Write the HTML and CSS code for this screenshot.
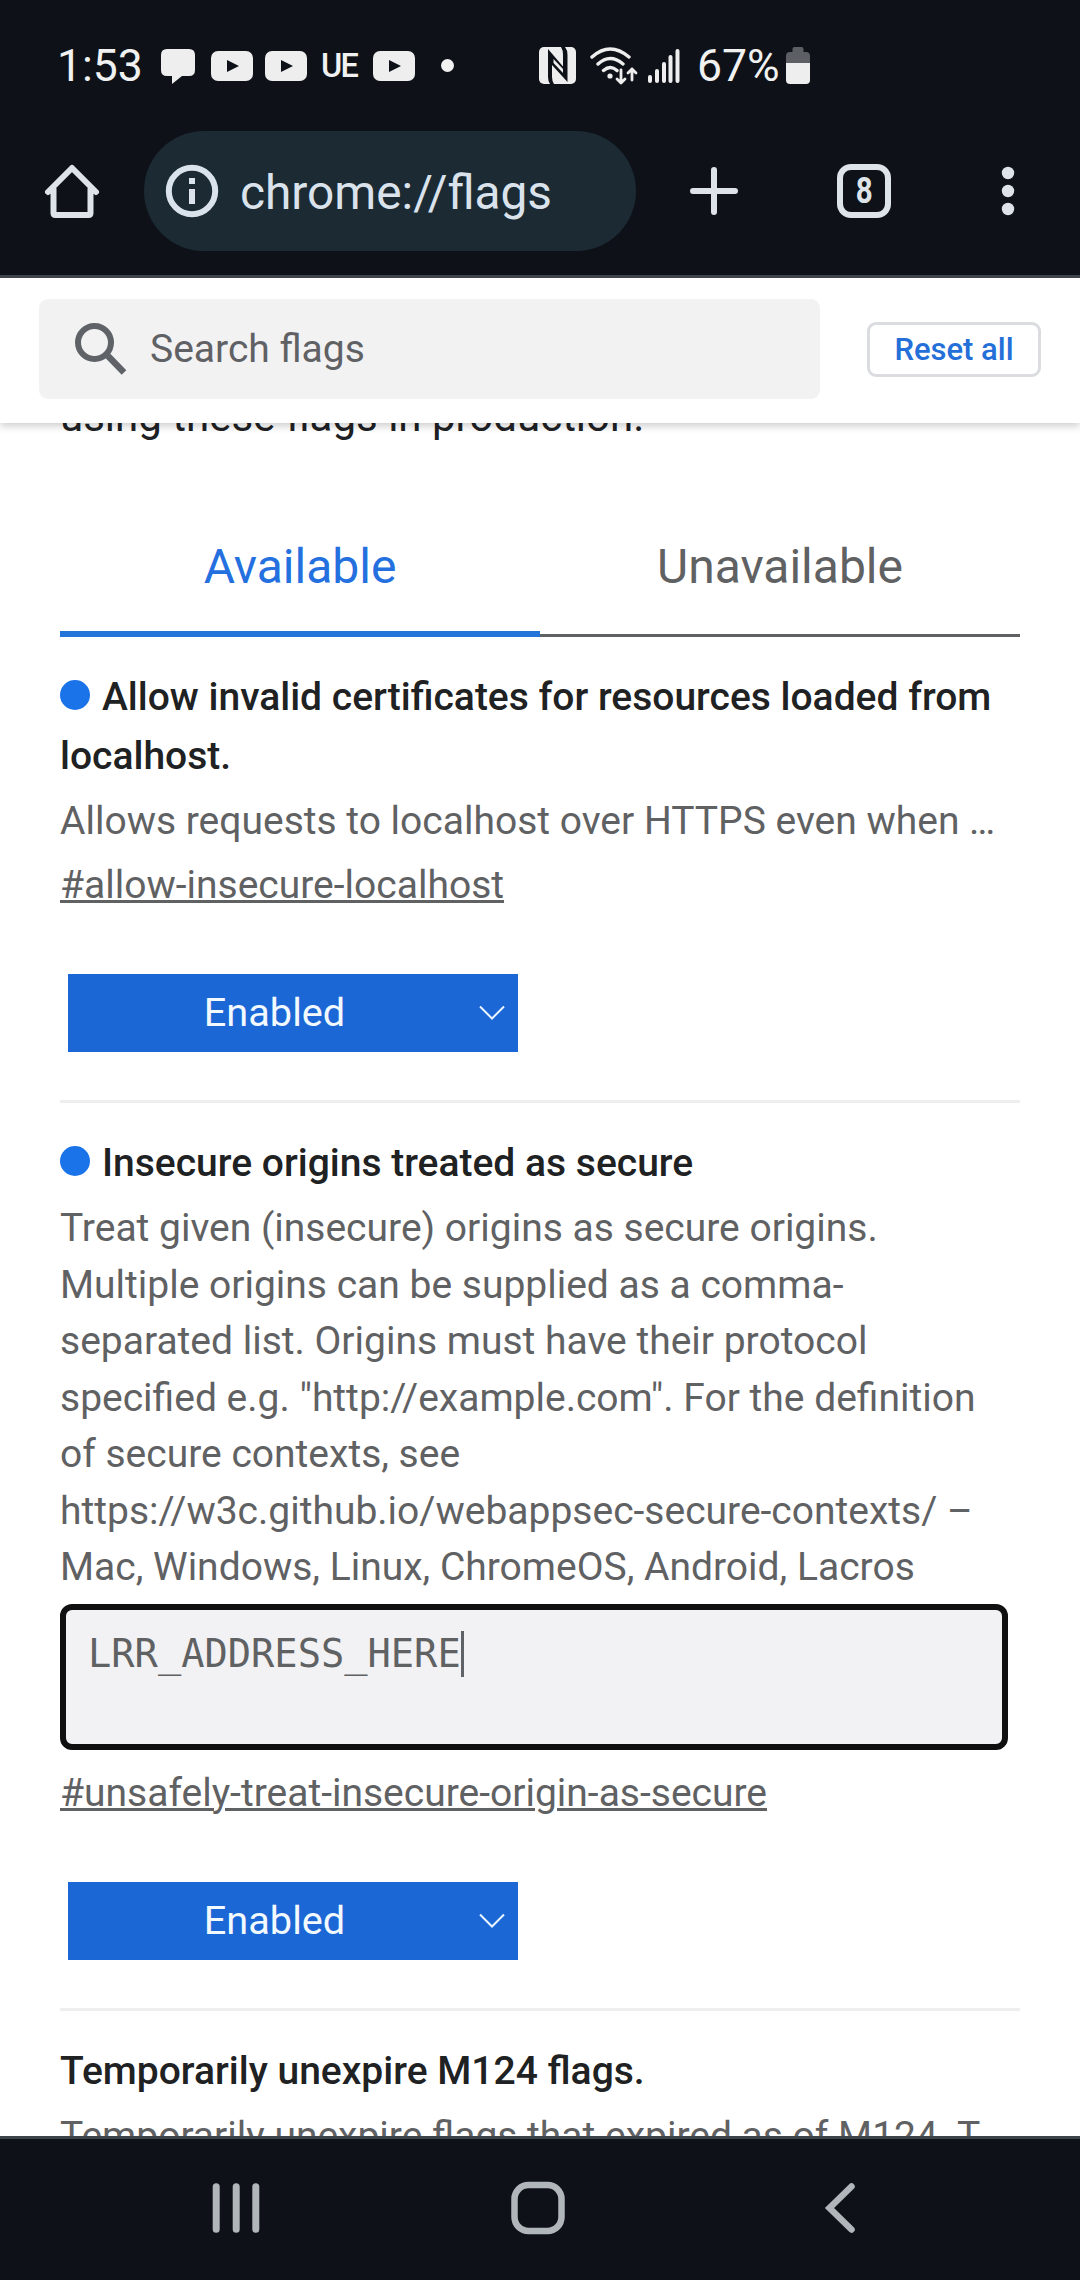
FILE: index.html
```html
<!DOCTYPE html>
<html lang="en">
<head>
<meta charset="utf-8">
<title>Experiments</title>
<link rel="stylesheet" href="styles.css">
</head>
<body>
<div class="screen">
  <header class="chrome">
    <div class="status">
      <div class="status-left">
        <span class="clock">1:53</span>
        <svg class="ic-chat" width="34" height="36" viewBox="0 0 34 36"><path fill="#eee" d="M6 0h22q6 0 6 6v15q0 6-6 6h-7L11 35v-8H6q-6 0-6-6V6q0-6 6-6z"/></svg>
        <svg class="ic-video" width="42" height="30" viewBox="0 0 42 30"><rect width="42" height="30" rx="7" fill="#eee"/><path fill="#0e1218" d="M16 9l12 6-12 6z"/></svg>
        <svg class="ic-video" width="42" height="30" viewBox="0 0 42 30"><rect width="42" height="30" rx="7" fill="#eee"/><path fill="#0e1218" d="M16 9l12 6-12 6z"/></svg>
        <span class="ue">UE</span>
        <svg class="ic-video" width="42" height="30" viewBox="0 0 42 30"><rect width="42" height="30" rx="7" fill="#eee"/><path fill="#0e1218" d="M16 9l12 6-12 6z"/></svg>
        <span class="more-dot"></span>
      </div>
      <div class="status-right">
        <svg width="37" height="37" viewBox="0 0 37 37"><rect width="37" height="37" rx="5" fill="#eee"/><path fill="#0e1218" d="M9 2l15 17.500V8q0-5-2-8h4q2.500 3 2.500 8v27L13 18v12q0 4 2 7h-4q-2-3-2-7z"/><path fill="#eee" d="M14.500 12v4L24 26v-4z"/></svg>
        <svg class="ic-wifi" width="48" height="38" viewBox="0 0 48 38" fill="none" stroke="#eee" stroke-width="3.400" stroke-linecap="round"><path d="M2 10Q20-6 39 10M8 17q12-11 25 0M13.500 23.500q7-6 13.500 0"/><circle cx="20" cy="29" r="2.600" fill="#eee" stroke="none"/><path stroke-width="2.800" stroke-linejoin="round" d="M31 23v13M27 32l4 4 4-4M42 33V22M38 26l4-4 4 4"/></svg>
        <svg class="ic-signal" width="32" height="36" viewBox="0 0 32 36" stroke="#eee" stroke-width="4" stroke-linecap="round"><path d="M2 29v4M9 23v10M16 16v17M22.500 9v24M29.500 3v30"/></svg>
        <span class="battery-text">67%</span>
        <svg class="ic-battery" width="24" height="37" viewBox="0 0 24 37"><path fill="#5c5f64" d="M6.500 5V2q0-2 2-2h7q2 0 2 2v3H20q4 0 4 4v8H0V9q0-4 4-4z"/><path fill="#eee" d="M0 16h24v17q0 4-4 4H4q-4 0-4-4z"/></svg>
      </div>
    </div>
    <div class="toolbar">
      <svg class="ic-home" width="56" height="56" viewBox="0 0 56 56" fill="none" stroke="#dee3e9" stroke-width="6" stroke-linejoin="round" stroke-linecap="round"><path d="M4 29L28 5l24 24M9.500 26v24q0 2 2 2h33q2 0 2-2V26" /></svg>
      <div class="omnibox">
        <svg width="54" height="54" viewBox="0 0 54 54"><circle cx="27" cy="27" r="23.200" fill="none" stroke="#dae3ec" stroke-width="6"/><path fill="#dae3ec" d="M24 14h6v6h-6zM24 25h6v15h-6z"/></svg>
        <span class="url">chrome://flags</span>
      </div>
      <svg class="ic-plus" width="50" height="50" viewBox="0 0 50 50" stroke="#dee3e9" stroke-width="6" stroke-linecap="round"><path d="M25 4v42M4 25h42"/></svg>
      <div class="tab-count"><span>8</span></div>
      <svg class="ic-dots" width="14" height="50" viewBox="0 0 14 50" fill="#dee3e9"><circle cx="7" cy="7" r="6.200"/><circle cx="7" cy="25" r="6.200"/><circle cx="7" cy="43" r="6.200"/></svg>
    </div>
  </header>

  <main class="page">
    <div class="search-bar">
      <div class="search-field">
        <svg width="54" height="54" viewBox="0 0 54 54" fill="none" stroke="#5f6368"><circle cx="20.500" cy="20.500" r="16.500" stroke-width="6"/><path stroke-width="4" d="M32 32l3 3"/><path stroke-width="6.500" d="M34 34l16 16.500"/></svg>
        <span>Search flags</span>
      </div>
      <div class="reset">Reset all</div>
    </div>

    <div class="content">
      <p class="intro">using these flags in production.</p>
      <div class="tabs">
        <div class="tab active">Available</div>
        <div class="tab">Unavailable</div>
      </div>

      <section class="flag">
        <h2><span class="bullet"></span>Allow invalid certificates for resources loaded from localhost.</h2>
        <p>Allows requests to localhost over HTTPS even when …</p>
        <a class="permalink">#allow-insecure-localhost</a>
        <div class="select"><span>Enabled</span><svg width="26" height="16" viewBox="0 0 26 16" fill="none" stroke="#eaf5ff" stroke-width="2"><path d="M1 1.500l12 12 12-12"/></svg></div>
      </section>

      <section class="flag">
        <h2><span class="bullet"></span>Insecure origins treated as secure</h2>
        <p>Treat given (insecure) origins as secure origins. Multiple origins can be supplied as a comma-separated list. Origins must have their protocol specified e.g. "http://example.com". For the definition of secure contexts, see<br>https://w3c.github.io/webappsec-secure-contexts/ – Mac, Windows, Linux, ChromeOS, Android, Lacros</p>
        <div class="textarea"><span class="value">LRR_ADDRESS_HERE</span><span class="caret"></span></div>
        <a class="permalink">#unsafely-treat-insecure-origin-as-secure</a>
        <div class="select"><span>Enabled</span><svg width="26" height="16" viewBox="0 0 26 16" fill="none" stroke="#eaf5ff" stroke-width="2"><path d="M1 1.500l12 12 12-12"/></svg></div>
      </section>

      <section class="flag">
        <h2>Temporarily unexpire M124 flags.</h2>
        <p>Temporarily unexpire flags that expired as of M124. T</p>
      </section>
    </div>
  </main>

  <nav class="navbar">
    <svg width="48" height="52" viewBox="0 0 48 52" stroke="#b1b6bb" stroke-width="7" stroke-linecap="round"><path d="M4.200 4.700v42.600M24.200 4.700v42.600M43.800 4.700v42.600"/></svg>
    <svg class="nav-home" width="54" height="54" viewBox="0 0 54 54"><rect x="3.500" y="4" width="47" height="46" rx="14" fill="none" stroke="#b1b6bb" stroke-width="6.500"/></svg>
    <svg width="32" height="52" viewBox="0 0 32 52" fill="none" stroke="#b1b6bb" stroke-width="6.500" stroke-linecap="round"><path d="M27.500 4.500L5.500 26l22 21.500"/></svg>
  </nav>
</div>
</body>
</html>
```
FILE: styles.css
```css
* { box-sizing: border-box; }
body { margin: 0; background: #fff; font-family: Roboto, "Liberation Sans", sans-serif; }
h2, p { margin: 0; }
svg { display: block; flex: none; }

.screen { width: 1080px; height: 2280px; display: flex; flex-direction: column; overflow: hidden; }

.chrome { height: 278px; flex: none; background: #0e1218; border-bottom: 3px solid #3f434a; }
.status { height: 131px; padding: 0 270px 0 57px; display: flex; justify-content: space-between; align-items: center; color: #f1f1f1; }
.status-left, .status-right { display: flex; align-items: center; }
.clock, .battery-text { font-size: 44.5px; line-height: 50px; }
.clock { width: 104px; }
.ic-chat { margin: 2px 16px 0 0; }
.ic-video { margin-right: 12px; }
.ue { width: 54px; font-size: 32.5px; line-height: 36px; font-weight: 500; letter-spacing: -1.8px; text-align: center; margin: 0 7px 0 -7px; }
.more-dot { width: 13px; height: 13px; border-radius: 50%; background: #f1f1f1; margin-left: 14px; }
.ic-wifi { margin-left: 14px; }
.ic-signal { margin-left: 10px; }
.battery-text { width: 88px; margin-left: 17px; }
.ic-battery { margin-left: 1px; }

.toolbar { height: 120px; display: flex; align-items: center; }
.ic-home { margin-left: 44px; }
.omnibox { width: 492px; height: 120px; margin-left: 44px; border-radius: 60px; background: #1c2a34; padding-left: 21px; display: flex; align-items: center; }
.url { margin-left: 21px; padding-top: 3px; font-size: 47.8px; line-height: 56px; color: #dae3ec; }
.ic-plus { margin-left: 53px; }
.tab-count { width: 54px; height: 54px; margin-left: 98px; border: 6px solid #dee3e9; border-radius: 14px; color: #dee3e9; font-size: 36px; font-weight: 700; line-height: 42px; display: flex; justify-content: center; }
.tab-count span { transform: scaleX(.82); }
.ic-dots { margin-left: 110px; }

.page { flex: 1; min-height: 0; overflow: hidden; }
.search-bar { position: relative; z-index: 1; height: 145px; padding: 21px 39px 0 39px; display: flex; justify-content: space-between; align-items: flex-start; background: #fff; box-shadow: 0 3px 8px rgba(0, 0, 0, .2); }
.search-field { width: 781px; height: 100px; border-radius: 9px; background: #f2f2f3; padding-left: 35px; display: flex; align-items: center; font-size: 39px; line-height: 46px; color: #5f6164; }
.search-field span { margin-left: 22px; }
.reset { width: 174px; height: 55px; margin-top: 23px; border: 3px solid #dadce0; border-radius: 9px; color: #246fd8; font-size: 31px; font-weight: 500; line-height: 49px; text-align: center; }

.content { padding: 0 60px; }
.intro { height: 63px; margin-top: -38px; font-size: 42px; line-height: 63px; color: #202124; }
.tabs { height: 142px; margin-top: 47px; display: flex; }
.tab { flex: 1; padding-top: 32px; border-bottom: 3px solid #5f6163; color: #5f6163; font-size: 48px; line-height: 80px; text-align: center; }
.tab.active { border-bottom: 6px solid #2273da; color: #2470df; }

.flag { padding-top: 31px; height: 466px; border-bottom: 3px solid #eee; color: #5f6163; font-size: 39px; line-height: 56.55px; }
.flag h2 { color: #202122; font-size: 39px; font-weight: 500; line-height: 58.5px; }
.bullet { display: inline-block; width: 30px; height: 30px; margin-right: 12px; border-radius: 50%; background: #1a73e8; }
.flag p { width: 948px; margin-top: 7.5px; }
.permalink { display: block; margin-top: 7.5px; text-decoration: underline; text-decoration-thickness: 3px; }
.select { width: 450px; height: 78px; margin: 61px 0 0 8px; padding-right: 13px; background: #1b67d6; color: #f2f9ff; font-size: 39.7px; line-height: 78px; display: flex; align-items: center; }
.select span { flex: 1; padding-left: 2px; text-align: center; }
.flag:nth-of-type(2) { height: 908px; }
.textarea { width: 948px; height: 146px; margin-top: 8px; border: 6px solid #101010; border-radius: 12px; background: #f2f2f4; padding: 21px 0 0 22px; display: flex; }
.value { font-family: "DejaVu Sans Mono", monospace; font-size: 38.7px; line-height: 46px; }
.caret { width: 3px; height: 46px; background: #5f6368; }
.textarea + .permalink { margin-top: 15px; }

.navbar { height: 144px; flex: none; background: #0e1218; border-top: 3px solid #3d444a; padding: 0 224px 2px 212px; display: flex; justify-content: space-between; align-items: center; }
.navbar svg { margin-bottom: 1px; }
.nav-home { margin-right: 9px; }
```
